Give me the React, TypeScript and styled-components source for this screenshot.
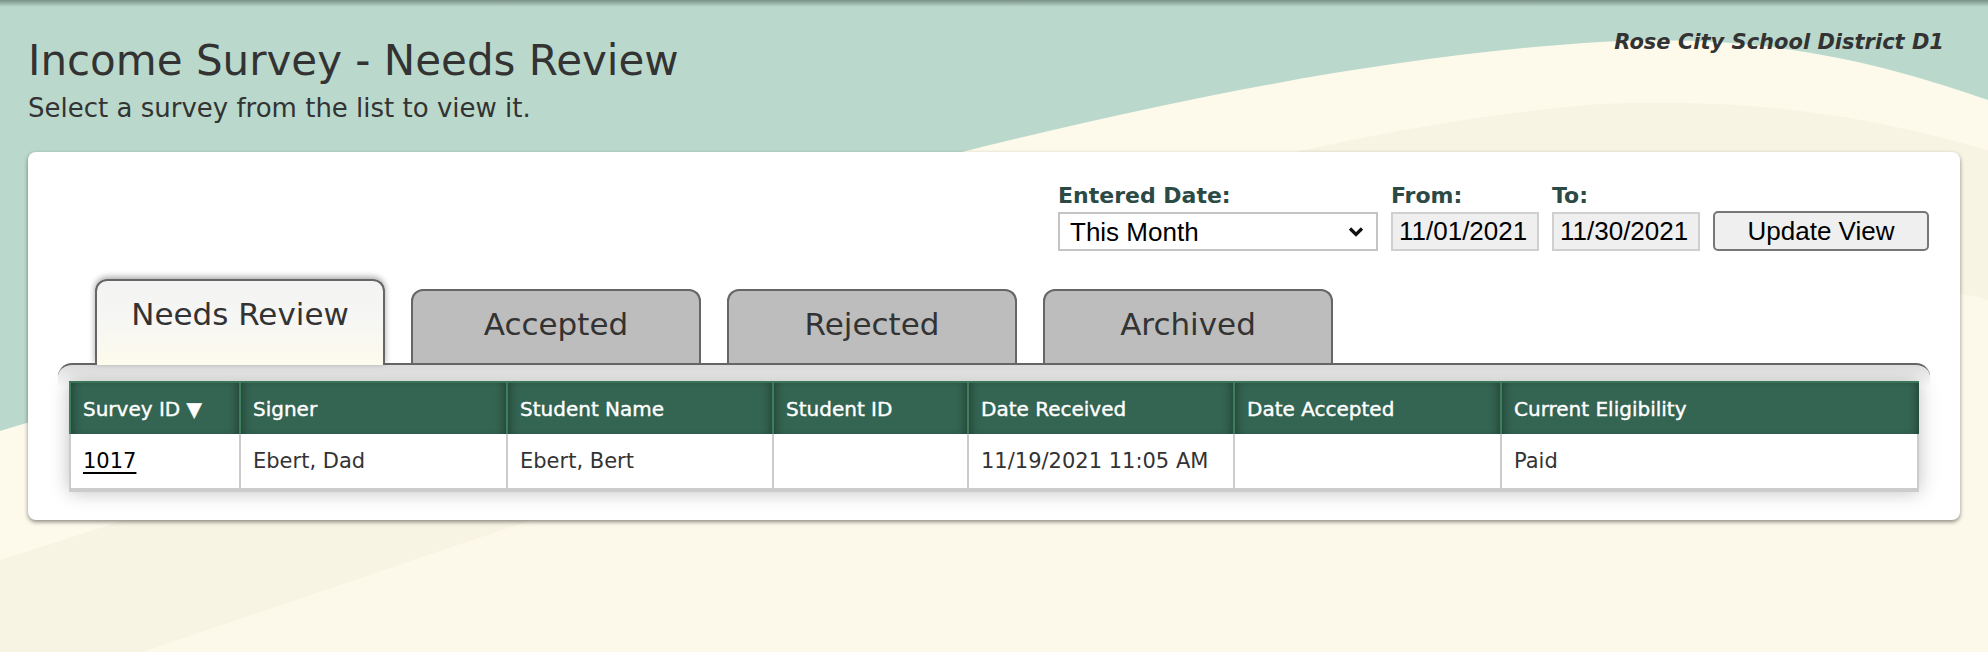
import styled, { createGlobalStyle } from 'styled-components'

const bgSvg = `<svg xmlns='http://www.w3.org/2000/svg' width='1988' height='652' viewBox='0 0 1988 652' preserveAspectRatio='none'>
<rect width='1988' height='652' fill='#bad9cc'/>
<path d='M0,431 C600,250 1150,70 1600,42 C1780,32 1900,70 1988,100 L1988,652 L0,652Z' fill='#fefaeb'/>
<path d='M0,560 C600,370 1150,140 1600,104 C1780,96 1900,125 1988,150 L1988,652 L0,652Z' fill='#f8f4e4'/>
<path d='M0,700 C600,500 1150,290 1600,256 C1780,248 1900,278 1988,300 L1988,652 L0,652Z' fill='#fdf9ea'/>
</svg>`

const chevronSvg = `<svg xmlns='http://www.w3.org/2000/svg' width='16' height='11' viewBox='0 0 16 11'><polyline points='2,2.5 8,8.5 14,2.5' fill='none' stroke='#111' stroke-width='3.2'/></svg>`

const svgUrl = (s: string) => `url("data:image/svg+xml,${encodeURIComponent(s)}")`

const GlobalStyle = createGlobalStyle`
  body {
    margin: 0;
    font-family: "DejaVu Sans", Verdana, sans-serif;
    color: #333;
  }
`

const Page = styled.div`
  min-height: 100vh;
  box-sizing: border-box;
  padding: 30px 28px 40px;
  background:
    linear-gradient(to bottom, rgba(70, 85, 80, 0.55) 0, rgba(70, 85, 80, 0) 7px),
    ${svgUrl(bgSvg)} 0 0 / 100% 100% no-repeat;
`

const Header = styled.header`
  display: flex;
  justify-content: space-between;
  align-items: flex-start;
`

const Title = styled.h1`
  margin: 7px 0 0;
  font-size: 42px;
  line-height: 48px;
  font-weight: normal;
  color: #333;
`

const Subtitle = styled.p`
  margin: 8px 0 0;
  font-size: 26px;
  line-height: 30px;
  color: #333;
`

const District = styled.div`
  margin-right: 16px;
  font-size: 21px;
  line-height: 24px;
  font-weight: bold;
  font-style: italic;
  color: #333;
`

const Card = styled.section`
  margin-top: 29px;
  background: #fff;
  border-radius: 8px;
  box-shadow: 0 2px 4px rgba(0, 0, 0, 0.45);
  padding: 32px 0 28px;
`

const Filters = styled.div`
  display: flex;
  justify-content: flex-end;
  align-items: flex-end;
  gap: 13px;
  padding-right: 31px;
`

const Field = styled.div`
  display: flex;
  flex-direction: column;
`

const Label = styled.label`
  font-size: 22px;
  line-height: 24px;
  font-weight: bold;
  color: #2c4a45;
  margin-bottom: 4px;
`

const Select = styled.select`
  appearance: none;
  width: 320px;
  height: 39px;
  box-sizing: border-box;
  border: 2px solid #c4c4c4;
  border-radius: 0;
  padding: 0 30px 0 10px;
  font-family: "Liberation Sans", Arial, sans-serif;
  font-size: 26px;
  color: #000;
  background: #fff ${svgUrl(chevronSvg)} right 12px center / 16px 11px no-repeat;
`

const DateInput = styled.input`
  width: 148px;
  height: 39px;
  box-sizing: border-box;
  border: 2px solid #cfcfcf;
  padding: 0 6px;
  font-family: "Liberation Sans", Arial, sans-serif;
  font-size: 26px;
  color: #000;
  background: #efefef;
`

const Button = styled.button`
  width: 216px;
  height: 40px;
  box-sizing: border-box;
  border: 2px solid #767676;
  border-radius: 5px;
  background: #efefef;
  font-family: "Liberation Sans", Arial, sans-serif;
  font-size: 26px;
  color: #000;
`

const Tabs = styled.div`
  display: flex;
  align-items: flex-end;
  gap: 26px;
  margin-top: 28px;
  padding-left: 67px;
`

const Tab = styled.div<{ $active?: boolean }>`
  position: relative;
  z-index: 1;
  width: 290px;
  height: ${p => (p.$active ? '86px' : '74px')};
  margin-bottom: ${p => (p.$active ? '-2px' : '0')};
  box-sizing: border-box;
  border: 2px solid #666;
  border-bottom: none;
  border-radius: 12px 12px 0 0;
  padding-top: 15px;
  text-align: center;
  font-size: 31px;
  line-height: 36px;
  color: #333;
  background: ${p =>
    p.$active ? 'linear-gradient(to bottom, #f3f3f3 0%, #f6f6f4 45%, #fdfbec 100%)' : '#bdbdbd'};
  box-shadow: ${p => (p.$active ? '0 -2px 6px rgba(0, 0, 0, 0.35)' : 'none')};
`

const Panel = styled.div`
  margin: 0 30px;
  border-top: 2px solid #666;
  border-radius: 14px 14px 0 0;
  padding: 16px 11px 0;
  background: linear-gradient(to bottom, #dedede 0, #fff 22px);
`

const Table = styled.table`
  width: 100%;
  table-layout: fixed;
  border-collapse: separate;
  border-spacing: 0;
  box-shadow: 0 0 18px rgba(0, 0, 0, 0.25);
`

const Th = styled.th`
  height: 53px;
  box-sizing: border-box;
  padding: 0 12px;
  text-align: left;
  font-size: 20px;
  font-weight: normal;
  -webkit-text-stroke: 0.4px #fff;
  color: #fff;
  background: #346452;
  border-left: 2px solid #3f7d5f;
  border-top: 2px solid #3a7558;
  box-shadow: inset 7px 0 8px -5px rgba(0, 0, 0, 0.35), inset -7px 0 8px -5px rgba(0, 0, 0, 0.35);
  white-space: nowrap;
`

const Td = styled.td`
  height: 58px;
  box-sizing: border-box;
  padding: 0 12px;
  font-size: 21px;
  color: #333;
  background: #fff;
  border-left: 2px solid #ccc;
  border-bottom: 4px solid #ccc;
  white-space: nowrap;

  &:last-child {
    border-right: 2px solid #ccc;
  }
`

const IdLink = styled.a`
  color: #000;
  text-decoration: underline;
  text-decoration-thickness: 2px;
  text-underline-offset: 4px;
`

const columns = [
  { title: 'Survey ID ▼', width: 170 },
  { title: 'Signer', width: 267 },
  { title: 'Student Name', width: 266 },
  { title: 'Student ID', width: 195 },
  { title: 'Date Received', width: 266 },
  { title: 'Date Accepted', width: 267 },
  { title: 'Current Eligibility', width: 419 },
]

const tabs = ['Needs Review', 'Accepted', 'Rejected', 'Archived']

function App() {
  return (
    <Page>
      <GlobalStyle />
      <Header>
        <div>
          <Title>Income Survey - Needs Review</Title>
          <Subtitle>Select a survey from the list to view it.</Subtitle>
        </div>
        <District>Rose City School District D1</District>
      </Header>

      <Card>
        <Filters>
          <Field>
            <Label>Entered Date:</Label>
            <Select defaultValue="month">
              <option value="month">This Month</option>
              <option value="last">Last Month</option>
              <option value="year">This Year</option>
            </Select>
          </Field>
          <Field>
            <Label>From:</Label>
            <DateInput readOnly value="11/01/2021" />
          </Field>
          <Field>
            <Label>To:</Label>
            <DateInput readOnly value="11/30/2021" />
          </Field>
          <Button>Update View</Button>
        </Filters>

        <Tabs>
          {tabs.map((t, i) => (
            <Tab key={t} $active={i === 0}>
              {t}
            </Tab>
          ))}
        </Tabs>

        <Panel>
          <Table>
            <colgroup>
              {columns.map(c => (
                <col key={c.title} style={{ width: c.width }} />
              ))}
            </colgroup>
            <thead>
              <tr>
                {columns.map(c => (
                  <Th key={c.title}>{c.title}</Th>
                ))}
              </tr>
            </thead>
            <tbody>
              <tr>
                <Td>
                  <IdLink href="#">1017</IdLink>
                </Td>
                <Td>Ebert, Dad</Td>
                <Td>Ebert, Bert</Td>
                <Td></Td>
                <Td>11/19/2021 11:05 AM</Td>
                <Td></Td>
                <Td>Paid</Td>
              </tr>
            </tbody>
          </Table>
        </Panel>
      </Card>
    </Page>
  )
}

export default App
